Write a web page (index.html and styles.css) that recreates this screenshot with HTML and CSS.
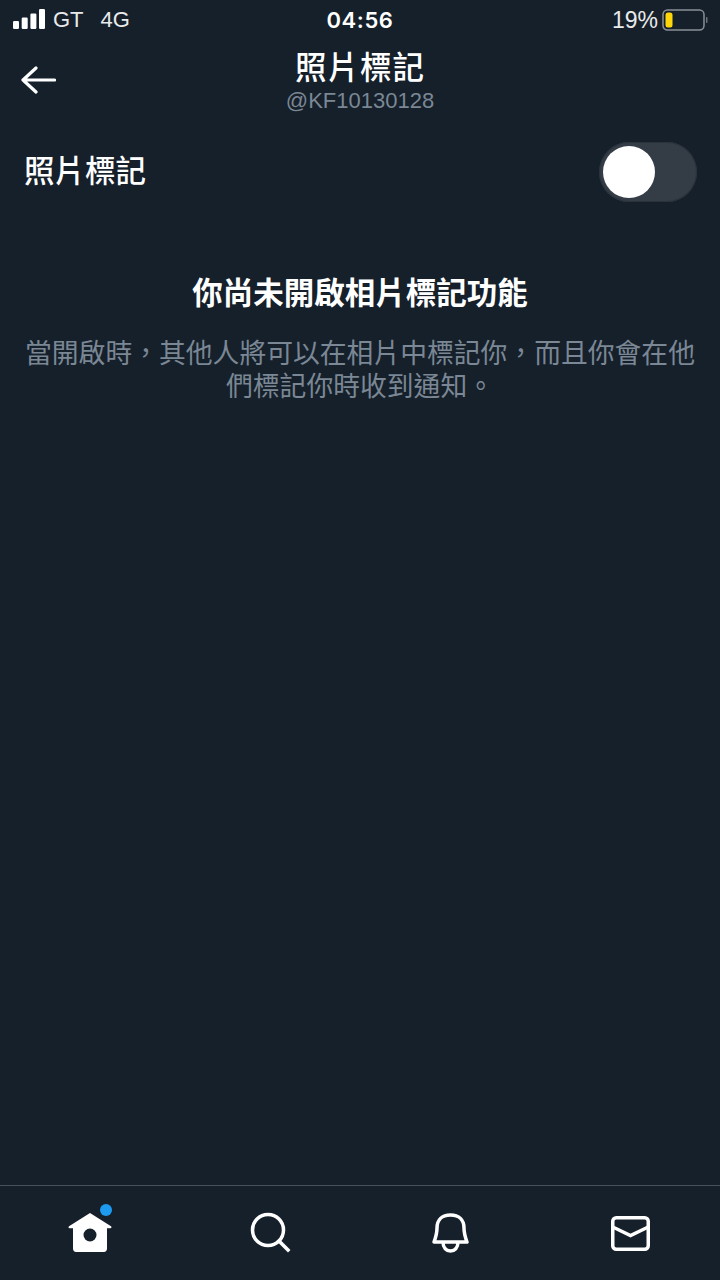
FILE: index.html
```
<!DOCTYPE html>
<html lang="zh-Hant">
<head>
<meta charset="utf-8">
<title>照片標記</title>
<link rel="stylesheet" href="styles.css">
</head>
<body>
<div class="screen">
  <div class="status">
    <div class="status-left">
      <svg class="signal" width="32" height="22" viewBox="0 0 32 22"><rect x="0" y="12" width="6" height="8" rx="1.200"/><rect x="8.700" y="8.500" width="6" height="11.500" rx="1.200"/><rect x="17.400" y="4.500" width="6" height="15.500" rx="1.200"/><rect x="26" y="0" width="6" height="20" rx="1.200"/></svg>
      <span class="carrier">GT</span><span class="net">4G</span>
    </div>
    <div class="clock">04:56</div>
    <div class="status-right">
      <span class="pct">19%</span>
      <svg class="battery" width="46" height="24" viewBox="0 0 46 24"><rect x="1" y="2" width="41" height="20" rx="4.500" fill="none" stroke="#8b8f95" stroke-width="1.500"/><rect x="3.500" y="4.500" width="7" height="15" rx="2.500" fill="#ffd60a"/><rect x="44" y="9" width="1.500" height="6" rx="0.700" fill="#6f747a"/></svg>
    </div>
  </div>
  <header class="nav">
    <svg class="back" width="36" height="32" viewBox="0 0 36 32"><path d="M34.500 16H3M16 4 3 16l13 12" fill="none" stroke="#fff" stroke-width="3.200" stroke-linecap="round" stroke-linejoin="round"/></svg>
    <div class="titles">
      <div class="title">照片標記</div>
      <div class="handle">@KF10130128</div>
    </div>
  </header>
  <div class="row">
    <div class="row-label">照片標記</div>
    <div class="toggle"><div class="knob"></div></div>
  </div>
  <section class="empty">
    <h2 class="empty-title">你尚未開啟相片標記功能</h2>
    <p class="empty-text">當開啟時，其他人將可以在相片中標記你，而且你會在他們標記你時收到通知。</p>
  </section>
  <div class="spacer"></div>
  <nav class="tabs">
    <div class="tab">
      <svg width="44" height="44" viewBox="0 0 44 44"><path d="M22 4 1 17.300c-1 .9-.5 2 .7 2H5v20.500C5 41.800 6.300 43 8 43h28c1.700 0 3-1.200 3-3.200V19.300h3.300c1.200 0 1.700-1.100.7-2Z" fill="#fff"/><circle cx="22" cy="26" r="6.500" fill="#15202b"/></svg>
      <span class="dot"></span>
    </div>
    <div class="tab">
      <svg width="44" height="44" viewBox="0 0 44 44"><circle cx="20" cy="21" r="15.500" fill="none" stroke="#fff" stroke-width="3.500"/><path d="m31 32 9 9" fill="none" stroke="#fff" stroke-width="3.500" stroke-linecap="square"/></svg>
    </div>
    <div class="tab">
      <svg width="44" height="44" viewBox="0 0 44 44"><path d="M6 33c1.500-4 3-8 3-14C9 11 14 6 22.500 6S36 11 36 19c0 6 1.500 10 3 14ZM15 33c0 6 3.500 9 7.500 9s7.500-3 7.500-9" fill="none" stroke="#fff" stroke-width="3.500" stroke-linejoin="round"/></svg>
    </div>
    <div class="tab">
      <svg width="44" height="44" viewBox="0 0 44 44"><rect x="4.750" y="8.750" width="35.500" height="31.500" rx="3.500" fill="none" stroke="#fff" stroke-width="3.500"/><path d="m4.750 18 17.750 8.500L40.250 18" fill="none" stroke="#fff" stroke-width="3.500"/></svg>
    </div>
  </nav>
</div>
</body>
</html>
```
FILE: styles.css
```
* { box-sizing: border-box; margin: 0; padding: 0; }
html, body { width: 720px; height: 1280px; overflow: hidden; }
body { background: #15202b; color: #fff; font-family: "Liberation Sans", "Noto Sans CJK TC", sans-serif; }
.screen { width: 720px; height: 1280px; display: flex; flex-direction: column; }
.status { height: 40px; padding: 0 12px 0 13px; display: flex; align-items: center; justify-content: space-between; position: relative; font-size: 22px; }
.status-left { display: flex; align-items: center; color: #e9eaec; }
.signal { fill: #fff; margin-right: 8px; margin-top: -1px; }
.net { margin-left: 17px; }
.clock { position: absolute; left: 0; right: 0; text-align: center; font-family: "Inter", sans-serif; font-size: 22px; font-weight: 600; letter-spacing: 0.600px; }
.status-right { display: flex; align-items: center; gap: 4px; color: #e9eaec; }
.pct { font-size: 23px; }
.nav { height: 76px; position: relative; display: flex; justify-content: center; }
.back { position: absolute; left: 20px; top: 24px; }
.titles { text-align: center; padding-top: 3px; }
.title { font-size: 31.500px; line-height: 44px; font-weight: 500; font-family: "Noto Sans CJK TC", sans-serif; letter-spacing: 1px; }
.handle { font-size: 22px; line-height: 28px; color: #7b8794; }
.row { height: 88px; padding: 0 23px 0 24px; display: flex; align-items: center; justify-content: space-between; margin-top: 12px; }
.row-label { font-family: "Noto Sans CJK TC", sans-serif; font-size: 30.500px; font-weight: 500; line-height: 44px; margin-top: -6px; }
.toggle { width: 98px; height: 60px; border-radius: 30px; background: #343c46; padding: 4px 0 4px 4px; box-shadow: inset 0 0 0 1px #2a323c; }
.knob { width: 52px; height: 52px; border-radius: 50%; background: #fff; }
.empty { padding: 0 24px; text-align: center; margin-top: 53px; font-family: "Noto Sans CJK TC", sans-serif; }
.empty-title { font-size: 30.500px; line-height: 44px; font-weight: 700; }
.empty-text { margin-top: 22px; font-size: 26.800px; line-height: 33px; color: #7b8794; }
.spacer { flex: 1; }
.tabs { height: 95px; border-top: 1px solid #48505a; display: flex; }
.tab { flex: 1; display: flex; align-items: center; justify-content: center; padding-bottom: 4px; position: relative; }
.dot { position: absolute; left: 100px; top: 18px; width: 12px; height: 12px; border-radius: 50%; background: #1d9bf0; }
```
